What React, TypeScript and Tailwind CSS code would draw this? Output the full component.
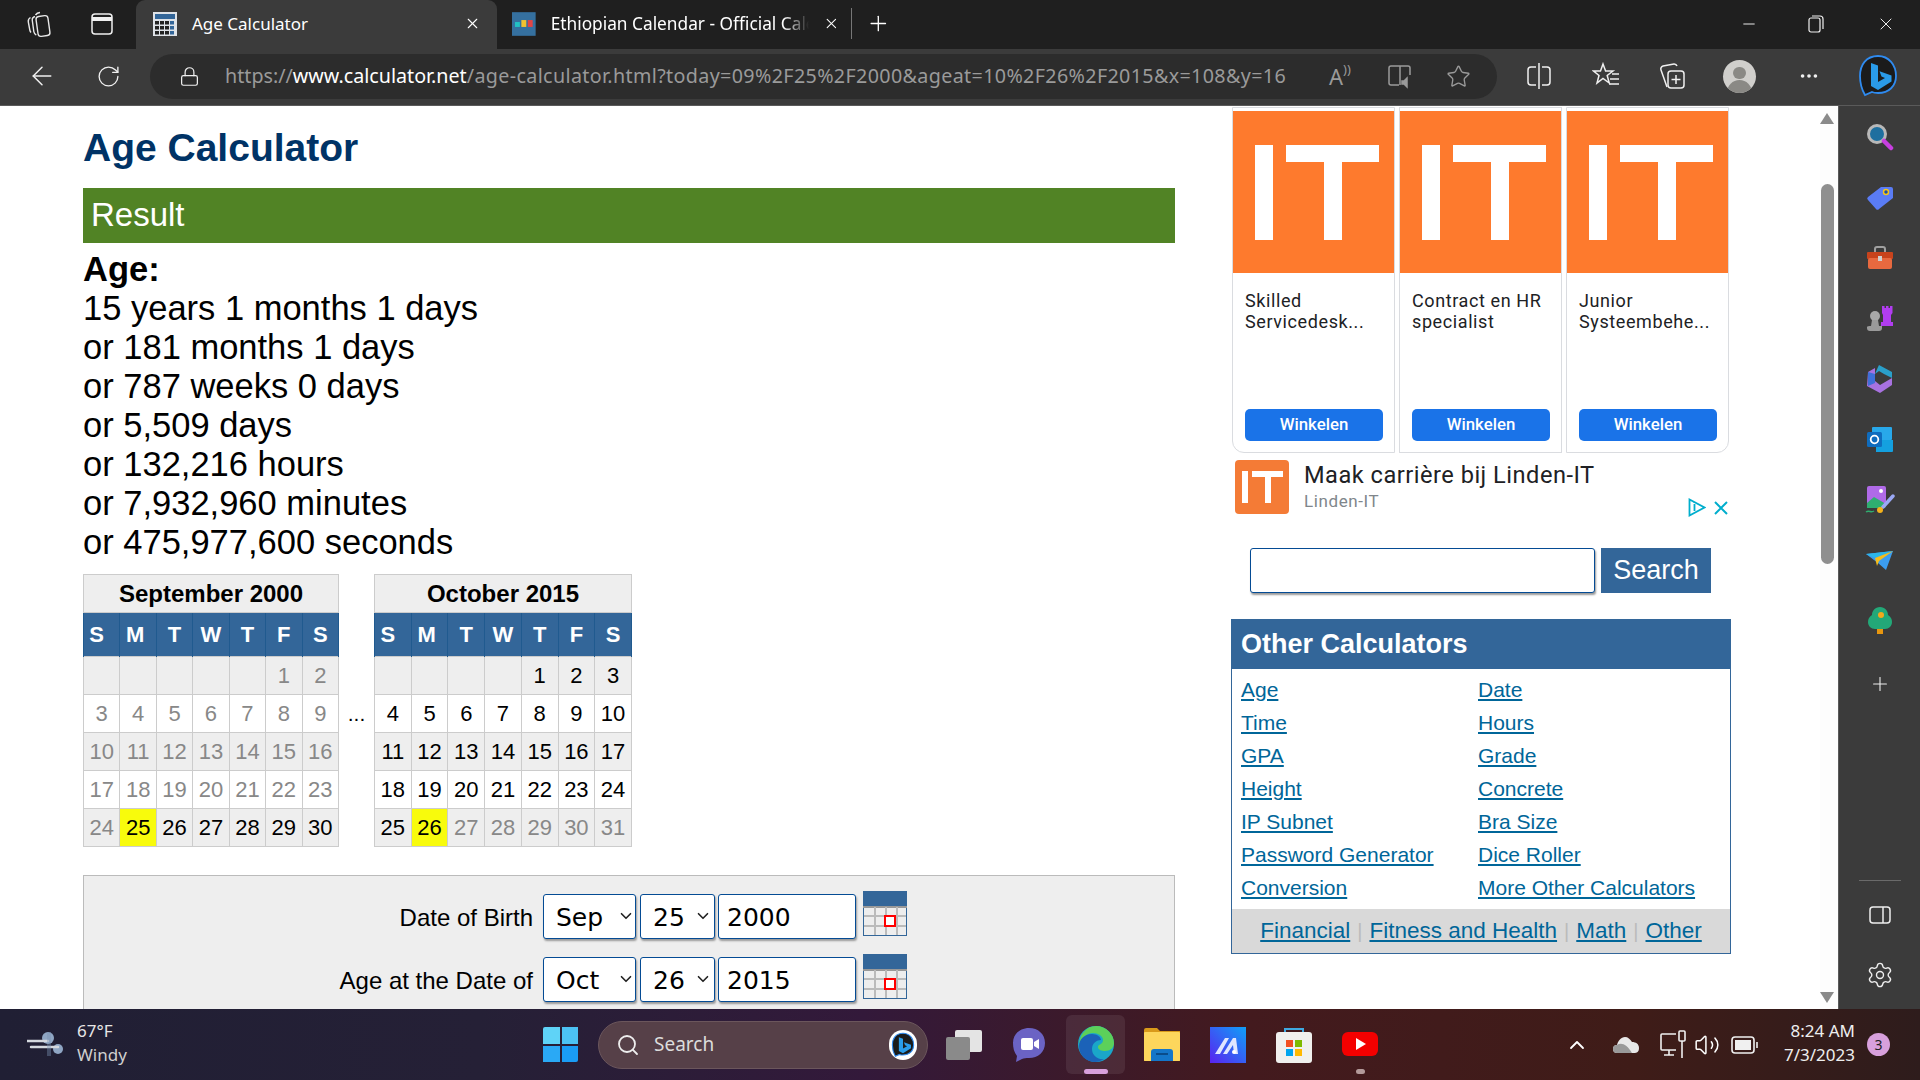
import type { ReactNode } from "react";
import { Minus, X, Plus, Search, Star, RotateCw, ArrowLeft, ChevronUp, ChevronDown, MoreHorizontal, Settings, Lock, Volume2 } from "lucide-react";

const sans = "font-['Liberation_Sans',Arial,sans-serif]";
const ui = "font-['Noto_Sans',sans-serif]";

const blue = "bg-[#336699]";

function BingIcon({ size = 44 }: { size?: number }) {
  return (
    <svg width={size} height={size} viewBox="0 0 44 44">
      <path d="M22 2C10 2 4 11 4 22c0 8 2 14 5 19l7-3c2 1 4 1 6 1 11 0 18-7 18-17C40 11 33 2 22 2Z" fill="#1b1b1b" stroke="#2f8bf0" strokeWidth="1.8" />
      <path d="M15 9l7 2.500V28l7-4-3.500-1.600-2-5.200 12 4.200v6L22 36l-7-4Z" fill="#2a9be8" />
    </svg>
  );
}

function CalcFavicon() {
  return (
    <svg width="24" height="24" viewBox="0 0 24 24">
      <rect width="24" height="24" fill="#dfe3e8" />
      <rect x="2" y="2" width="20" height="5" fill="#336699" />
      {[9, 14, 19].map((y) =>
        [2, 7, 12, 17].map((x) => <rect key={`${x}-${y}`} x={x} y={y} width="4" height="3.5" fill={x === 17 ? "#336699" : "#222"} />)
      )}
    </svg>
  );
}

function EthFavicon() {
  return (
    <svg width="24" height="24" viewBox="0 0 24 24">
      <rect width="24" height="24" fill="#35709f" />
      <rect x="3" y="10" width="5" height="5" fill="#22c1c3" />
      <rect x="9.500" y="8" width="5" height="7" fill="#f2c230" />
      <rect x="16" y="8" width="5" height="7" fill="#e04545" />
    </svg>
  );
}

function TabStrip() {
  return (
    <div className={`h-[49px] bg-[#1f1f1f] flex items-end text-white ${ui}`}>
      <div className="w-[78px] h-[47px] mb-[2px] flex items-center justify-center">
        <svg width="26" height="28" viewBox="0 0 26 28" fill="none" stroke="#e8e8e8" strokeWidth="1.4">
          <rect x="11" y="6" width="12" height="20" rx="3" transform="rotate(-8 17 16)" />
          <path d="M9 6.500C7 7 6 8.500 6.300 10.500l1.500 11c.2 1.500 1 2.800 2.500 3.500" />
          <path d="M14 2.500c-2 .2-3.500 1-4.500 2.500M4.500 7.500C2.800 8.500 2 10 2.300 12l1.500 8c.2 1 .6 1.800 1.200 2.500" />
        </svg>
      </div>
      <div className="w-[48px] h-[47px] mb-[2px] flex items-center justify-center">
        <svg width="22" height="24" viewBox="0 0 22 24" fill="none" stroke="#f0f0f0" strokeWidth="1.5">
          <rect x="1" y="2" width="20" height="20" rx="3" />
          <path d="M1 7h20" strokeWidth="4" />
        </svg>
      </div>
      <div className="ml-[10px] w-[361px] h-[49px] bg-[#3b3b3b] rounded-t-[9px] flex items-center pl-[17px] pb-[2px]">
        <CalcFavicon />
        <span className="ml-[15px] text-[17px] w-[272px]">Age Calculator</span>
        <X size={17} strokeWidth={1.5} />
      </div>
      <div className="w-[394px] h-[49px] flex items-center pl-[15px] pb-[2px]">
        <EthFavicon />
        <span className="ml-[15px] text-[17.3px] w-[262px] whitespace-nowrap overflow-hidden [mask-image:linear-gradient(to_right,black_90%,transparent)]">
          Ethiopian Calendar - Official Calendar
        </span>
        <X size={17} strokeWidth={1.5} className="ml-[14px]" />
        <div className="ml-[12px] w-px h-[31px] bg-[#777]" />
        <Plus size={25} strokeWidth={1.3} className="ml-[14px]" />
      </div>
      <div className="ml-auto flex h-[49px] items-center pb-[2px]">
        <Minus size={18} strokeWidth={1.2} className="mr-[50px]" />
        <svg width="16" height="18" viewBox="0 0 16 18" fill="none" stroke="#f0f0f0" strokeWidth="1.2" className="mr-[52px]">
          <rect x="1" y="3" width="11" height="14" rx="2" />
          <path d="M4 1h8a3 3 0 0 1 3 3v10" />
        </svg>
        <X size={20} strokeWidth={1.1} className="mr-[24px]" />
      </div>
    </div>
  );
}

function Toolbar() {
  return (
    <div className={`h-[57px] bg-[#3b3b3b] border-b border-[#5a5a5a] flex items-center pb-[2px] text-[#f0f0f0] ${ui}`}>
      <div className="w-[84px] flex justify-center">
        <ArrowLeft size={30} strokeWidth={1.2} />
      </div>
      <div className="w-[48px] flex justify-center">
        <RotateCw size={25} strokeWidth={1.3} />
      </div>
      <div className="ml-[18px] w-[1347px] h-[45px] rounded-[23px] bg-[#2c2c2c] flex items-center">
        <Lock size={21} strokeWidth={1.4} className="ml-[29px]" />
        <span className="ml-[25px] w-[1064px] text-[19.7px] whitespace-nowrap text-[#9a9a9a]">
          https://<span className="text-white">www.calculator.net</span>
          <span className="tracking-[0.36px]">/age-calculator.html?today=09%2F25%2F2000&amp;ageat=10%2F26%2F2015&amp;x=108&amp;y=16</span>
        </span>
        <span className="ml-[40px] text-[#9a9a9a] text-[22px] w-[34px]">
          A<span className="text-[13px] align-top">))</span>
        </span>
        <svg width="26" height="26" viewBox="0 0 26 26" fill="none" stroke="#9a9a9a" strokeWidth="1.5" className="ml-[24px]">
          <path d="M12 22H4a2 2 0 0 1-2-2V5a2 2 0 0 1 2-2h9v19M13 3h8a2 2 0 0 1 2 2v7" />
          <path d="M15 18h2l3-3v9l-3-3h-2Z" fill="#9a9a9a" />
        </svg>
        <Star size={25} strokeWidth={1.3} className="ml-[33px] text-[#9a9a9a]" />
      </div>
      <div className="ml-[29px] w-[26px]">
        <svg width="26" height="28" viewBox="0 0 26 28" fill="none" stroke="#f0f0f0" strokeWidth="1.5">
          <path d="M10 5H5a3 3 0 0 0-3 3v12a3 3 0 0 0 3 3h5M16 5h5a3 3 0 0 1 3 3v12a3 3 0 0 1-3 3h-5M13 1v26" />
        </svg>
      </div>
      <div className="ml-[40px]">
        <svg width="28" height="28" viewBox="0 0 28 28" fill="none" stroke="#f0f0f0" strokeWidth="1.5">
          <path d="M11 2l2.600 7H21l-5.800 4.500 2 7.500L11 16.500 5 21l2-7.500L1.500 9h7Z" />
          <path d="M20 12h7M18 17h9M17 22h10" />
        </svg>
      </div>
      <div className="ml-[38px]">
        <svg width="28" height="28" viewBox="0 0 28 28" fill="none" stroke="#f0f0f0" strokeWidth="1.5">
          <path d="M9 25 3 8a3 3 0 0 1 2-4l11-2a3 3 0 0 1 3 2" />
          <rect x="10" y="9" width="16" height="17" rx="3" />
          <path d="M18 13v9M13.500 17.500h9" />
        </svg>
      </div>
      <div className="ml-[37px] w-[33px] h-[33px] rounded-full bg-[#d0cfcc] overflow-hidden flex flex-col items-center">
        <div className="mt-[7px] w-[13px] h-[14px] rounded-full bg-[#8a8985]" />
        <div className="mt-[1px] w-[25px] h-[14px] rounded-t-full bg-[#8a8985]" />
      </div>
      <MoreHorizontal size={22} strokeWidth={2} className="ml-[42px]" />
      <div className="ml-[36px]">
        <BingIcon />
      </div>
    </div>
  );
}

const results = [
  "15 years 1 months 1 days",
  "or 181 months 1 days",
  "or 787 weeks 0 days",
  "or 5,509 days",
  "or 132,216 hours",
  "or 7,932,960 minutes",
  "or 475,977,600 seconds",
];

type CalProps = { title: string; cells: (number | null)[]; activeFrom: number; activeTo: number; mark: number; width: string };

// activeFrom/activeTo are cell indexes, everything outside them is grey
function MonthTable({ title, cells, activeFrom, activeTo, mark, width }: CalProps) {
  const heads = ["S", "M", "T", "W", "T", "F", "S"];
  const rows = [0, 1, 2, 3, 4].map((r) => cells.slice(r * 7, r * 7 + 7));
  return (
    <table className={`border-collapse table-fixed ${width} text-[22px] ${sans}`}>
      <thead>
        <tr>
          <th colSpan={7} className="h-[38px] bg-[#eeeeee] border border-[#cccccc] text-[24px] font-bold text-black">
            {title}
          </th>
        </tr>
        <tr className="bg-[#336699] text-white">
          {heads.map((h, i) => (
            <th
              key={i}
              className={`h-[44px] w-[36.7px] p-0 font-bold border-x border-[#205a8f] text-[22px] ${i === 0 ? "pr-[10px]" : i === 1 ? "pr-[6px]" : ""}`}
            >
              {h}
            </th>
          ))}
        </tr>
      </thead>
      <tbody>
        {rows.map((row, r) => (
          <tr key={r} className={r % 2 === 0 ? "bg-[#eeeeee]" : "bg-white"}>
            {row.map((d, c) => {
              const idx = r * 7 + c;
              const on = idx >= activeFrom && idx <= activeTo;
              return (
                <td
                  key={c}
                  className={`h-[38px] p-0 text-center border border-[#cccccc] ${on ? "text-black" : "text-[#888888]"} ${idx === mark ? "bg-[#f8fb0c]" : ""}`}
                >
                  {d ?? ""}
                </td>
              );
            })}
          </tr>
        ))}
      </tbody>
    </table>
  );
}

const sepCells = [null, null, null, null, null, 1, 2, ...Array.from({ length: 28 }, (_, i) => i + 3)];
const octCells = [null, null, null, null, 1, 2, 3, ...Array.from({ length: 28 }, (_, i) => i + 4)];

function CalIcon({ className = "" }: { className?: string }) {
  return (
    <svg width="44" height="45" viewBox="0 0 44 45" className={className}>
      <rect width="44" height="45" fill="#336699" />
      <rect x="1" y="15" width="42" height="29" fill="#eeeeee" />
      <rect x="0" y="15" width="44" height="2" fill="#999" />
      {[11, 22, 33].map((x) => (
        <rect key={x} x={x} y="16" width="2" height="28" fill="#bbb" />
      ))}
      {[24, 34].map((y) => (
        <rect key={y} x="1" y={y} width="42" height="2" fill="#bbb" />
      ))}
      <rect x="22" y="25" width="10" height="10" fill="#fff" stroke="#ff0000" strokeWidth="2" />
    </svg>
  );
}

const fieldFont = "font-['DejaVu_Sans',sans-serif]";
const field = `h-[45px] bg-white border border-[#044b94] rounded-[3px] shadow-[1px_2px_2px_#999] text-black text-[25px] pt-[2px] ${fieldFont}`;

function SelectBox({ value, width, pad, arrow }: { value: string; width: string; pad: string; arrow: string }) {
  return (
    <div className={`relative ${width}`}>
      <select defaultValue={value} className={`${field} w-full appearance-none ${pad}`}>
        <option>{value}</option>
      </select>
      <ChevronDown size={18} strokeWidth={2.2} className={`absolute top-[13px] text-[#222] pointer-events-none ${arrow}`} />
    </div>
  );
}

function DateRow({ label, month, day, year }: { label: string; month: string; day: string; year: string }) {
  return (
    <div className="flex items-start h-[63px]">
      <label className="w-[459px] pr-[10px] pt-[6px] text-right text-[24px] text-black">{label}</label>
      <SelectBox value={month} width="w-[93px]" pad="pl-[12px]" arrow="right-[1px]" />
      <SelectBox value={day} width="w-[75px] ml-[4px]" pad="pl-[12px]" arrow="right-[3px]" />
      <input readOnly value={year} className={`${field} w-[138px] ml-[3px] pl-[8px]`} />
      <CalIcon className="ml-[7px] -mt-[3px]" />
    </div>
  );
}

function ItTile() {
  return (
    <div className="h-[162px] bg-[#fe7a2d] flex items-start pt-[34px] pl-[22px]">
      <div className="w-[18px] h-[95px] bg-white" />
      <div className="ml-[13px] w-[93px] h-[95px] flex flex-col items-center">
        <div className="w-full h-[17px] bg-white" />
        <div className="w-[18px] h-[78px] bg-white" />
      </div>
    </div>
  );
}

function AdCard({ title, rounded }: { title: string[]; rounded: string }) {
  return (
    <div className={`w-[163px] h-[346px] border border-[#dadce0] bg-white overflow-hidden flex flex-col pt-[3px] ${rounded}`}>
      <ItTile />
      <div className="mt-[17px] ml-[12px] text-[18px] leading-[21px] text-[#202124] font-['Roboto',sans-serif] flex-1 tracking-[0.6px]">
        {title.map((t) => (
          <div key={t}>{t}</div>
        ))}
      </div>
      <button className="ml-[12px] mb-[11px] w-[138px] h-[32px] rounded-[5px] bg-[#1a73e8] text-white text-[16.8px] font-medium font-['Roboto',sans-serif]">
        Winkelen
      </button>
    </div>
  );
}

function AdBlock() {
  return (
    <div className="ml-[1px] w-[497px]">
      <div className="flex gap-[4px] mt-[1px]">
        <AdCard title={["Skilled", "Servicedesk..."]} rounded="rounded-bl-[12px]" />
        <AdCard title={["Contract en HR", "specialist"]} rounded="" />
        <AdCard title={["Junior", "Systeembehe..."]} rounded="rounded-br-[12px]" />
      </div>
      <div className="flex items-start h-[54px] mt-[7px] ml-[3px] font-['Roboto',sans-serif]">
        <div className="w-[54px] h-[54px] rounded-[4px] bg-[#f47b36] flex items-start pt-[11px] pl-[7px]">
          <div className="w-[6px] h-[32px] bg-white" />
          <div className="ml-[4px] w-[31px] h-[32px] flex flex-col items-center">
            <div className="w-full h-[6px] bg-white" />
            <div className="w-[6px] h-[26px] bg-white" />
          </div>
        </div>
        <div className="ml-[15px] flex-1 pt-[1px]">
          <div className="text-[23.6px] leading-[28px] text-[#202124] tracking-[0.5px]">Maak carrière bij Linden-IT</div>
          <div className="flex items-start justify-between">
            <span className="text-[17px] text-[#80868b] tracking-[0.6px]">Linden-IT</span>
            <span className="flex items-center gap-[8px] mt-[9px] mr-[1px]">
              <svg width="18" height="19" viewBox="0 0 18 19" fill="none" stroke="#00aecd" strokeWidth="1.800">
                <path d="M1.500 1.500v16L16.500 9.500Z" />
                <path d="M6.500 6v7M6.500 4v1" />
              </svg>
              <svg width="14" height="14" viewBox="0 0 14 14" stroke="#00aecd" strokeWidth="2">
                <path d="M1 1l12 12M13 1 1 13" />
              </svg>
            </span>
          </div>
        </div>
      </div>
    </div>
  );
}

const calcLinks = [
  ["Age", "Date"],
  ["Time", "Hours"],
  ["GPA", "Grade"],
  ["Height", "Concrete"],
  ["IP Subnet", "Bra Size"],
  ["Password Generator", "Dice Roller"],
  ["Conversion", "More Other Calculators"],
];

function OtherCalculators() {
  const link = "text-[#006699] underline";
  return (
    <div className={`w-[500px] border border-[#336699] ${sans}`}>
      <div className={`h-[49px] ${blue} flex items-center pl-[9px] text-white font-bold text-[27px]`}>Other Calculators</div>
      <div className="grid grid-cols-[237px_1fr] pl-[9px] pt-[4px] pb-[5px] text-[21px]">
        {calcLinks.flat().map((l) => (
          <div key={l} className="h-[33px] flex items-center">
            <a className={link}>{l}</a>
          </div>
        ))}
      </div>
      <div className="h-[44px] bg-[#d9d9d9] flex items-center justify-center text-[22.5px]">
        <a className={link}>Financial</a>
        <span className="mx-[7px] text-[#bbbbbb] text-[20px]">|</span>
        <a className={link}>Fitness and Health</a>
        <span className="mx-[7px] text-[#bbbbbb] text-[20px]">|</span>
        <a className={link}>Math</a>
        <span className="mx-[7px] text-[#bbbbbb] text-[20px]">|</span>
        <a className={link}>Other</a>
      </div>
    </div>
  );
}

function Page() {
  return (
    <div className={`flex-1 bg-white overflow-hidden flex ${sans}`}>
      <div className="ml-[83px] w-[1092px] shrink-0">
        <h1 className="mt-[17px] h-[50px] text-[39px] leading-[50px] font-bold text-[#003366]">Age Calculator</h1>
        <div className="mt-[15px] h-[55px] bg-[#518325] flex items-center pl-[8px] pb-[1px] text-white text-[33px]">Result</div>
        <div className="mt-[7px] text-[34.5px] leading-[39px] text-black">
          <div className="font-bold">Age:</div>
          {results.map((r) => (
            <div key={r}>{r}</div>
          ))}
        </div>
        <div className="mt-[12px] flex items-center">
          <MonthTable title="September 2000" cells={sepCells} activeFrom={29} activeTo={34} mark={29} width="w-[256px]" />
          <div className="w-[35px] text-center text-[21px] text-black pt-[6px]">...</div>
          <MonthTable title="October 2015" cells={octCells} activeFrom={0} activeTo={29} mark={29} width="w-[258px]" />
        </div>
        <div className="mt-[28px] h-[200px] bg-[#eeeeee] border border-[#bbbbbb] pt-[18px]">
          <DateRow label="Date of Birth" month="Sep" day="25" year="2000" />
          <DateRow label="Age at the Date of" month="Oct" day="26" year="2015" />
        </div>
      </div>
      <div className="ml-[56px] w-[500px] shrink-0">
        <AdBlock />
        <div className="mt-[34px] flex ml-[19px]">
          <input className="w-[345px] h-[45px] border border-[#044b94] rounded-[3px] bg-white shadow-[1px_2px_2px_#999]" />
          <button className={`ml-[6px] w-[110px] h-[45px] ${blue} text-white text-[27px]`}>Search</button>
        </div>
        <div className="mt-[26px]">
          <OtherCalculators />
        </div>
      </div>
    </div>
  );
}

function Scrollbar() {
  return (
    <div className="w-[18px] bg-[#fdfdfd] flex flex-col items-center pt-[7px] pb-[6px] pr-[4px]">
      <div className="w-0 h-0 border-x-[7px] border-x-transparent border-b-[11px] border-b-[#8a8a8a]" />
      <div className="mt-[60px] w-[13px] h-[380px] rounded-full bg-[#8f8f8f]" />
      <div className="mt-auto w-0 h-0 border-x-[7px] border-x-transparent border-t-[11px] border-t-[#8a8a8a]" />
    </div>
  );
}

function SideIcon({ children }: { children: ReactNode }) {
  return <div className="h-[60.5px] flex items-center justify-center">{children}</div>;
}

function Sidebar() {
  return (
    <div className="w-[82px] bg-[#3b3b3b] border-l border-[#5a5a5a] flex flex-col items-center pt-[1px] text-[#eeeeee]">
      <SideIcon>
        <svg width="28" height="28" viewBox="0 0 28 28">
          <circle cx="11" cy="11" r="8.500" fill="#1e6f9f" stroke="#b8b8b8" strokeWidth="3" />
          <path d="M18 18l7 7" stroke="#c83fe0" strokeWidth="4.500" strokeLinecap="round" />
        </svg>
      </SideIcon>
      <SideIcon>
        <svg width="28" height="26" viewBox="0 0 28 26">
          <path d="M15 2h10a2 2 0 0 1 2 2v9L13 24a2 2 0 0 1-3 0L2 15a2 2 0 0 1 0-3Z" fill="#5a7cf5" />
          <circle cx="20" cy="7" r="2.500" fill="#1b4ea8" stroke="#f5c518" strokeWidth="1.500" />
        </svg>
      </SideIcon>
      <SideIcon>
        <svg width="28" height="24" viewBox="0 0 28 24">
          <path d="M9 6V3a2 2 0 0 1 2-2h6a2 2 0 0 1 2 2v3" fill="none" stroke="#a0a0a0" strokeWidth="2" />
          <rect x="1" y="6" width="26" height="7" rx="1" fill="#c8431c" />
          <rect x="2" y="12" width="24" height="11" rx="2" fill="#e8693f" />
          <rect x="12" y="10" width="4" height="5" fill="#cfcfcf" />
        </svg>
      </SideIcon>
      <SideIcon>
        <svg width="28" height="28" viewBox="0 0 28 28">
          <path d="M16 1h2.500v2H20V1h2.500v2H24V1h2.500v7L25 10v7h2v4H15v-4h2v-7l-1-2Z" fill="#b13df0" />
          <circle cx="9" cy="11" r="5" fill="#a8a8a8" />
          <path d="M6 15h6l1 6h3v2c0 2-1 3-3 3H4c-2 0-3-1-3-3v-1c0-1 2-1 4-1Z" fill="#9a9a9a" />
        </svg>
      </SideIcon>
      <SideIcon>
        <svg width="26" height="28" viewBox="0 0 26 28">
          <path d="M12 0 25 7v6l-8-4-5-3-4 3 3-7Z" fill="#2a9fc9" />
          <path d="M1 7l7-4v13l5 4 12-7v7l-12 8-13-7Z" fill="#a872e0" />
          <path d="M1 7l7 2v9l-7 3Z" fill="#3f6fd8" />
        </svg>
      </SideIcon>
      <SideIcon>
        <svg width="26" height="26" viewBox="0 0 26 26">
          <rect x="5" y="0" width="20" height="13" rx="1" fill="#28a8ea" />
          <path d="M9 13h17v11a1 1 0 0 1-1 1H9Z" fill="#14a0df" />
          <rect x="0" y="5" width="15" height="15" rx="1.500" fill="#0f6cbd" />
          <circle cx="7.500" cy="12.500" r="3.800" fill="none" stroke="#fff" strokeWidth="1.800" />
        </svg>
      </SideIcon>
      <SideIcon>
        <svg width="30" height="30" viewBox="0 0 30 30">
          <rect x="2" y="1" width="19" height="20" rx="2" fill="#b06ae8" />
          <path d="M2 18l7-6 12 7v2a2 2 0 0 1-2 2H2Z" fill="#2fae70" />
          <circle cx="16" cy="6" r="2" fill="#fff" />
          <path d="M18 22 28 11" stroke="#9aa8f5" strokeWidth="3.500" strokeLinecap="round" />
          <circle cx="15" cy="25" r="3" fill="#f5b21b" />
          <path d="M1 27c3-2 5 1 8-1" stroke="#2fae70" strokeWidth="1.500" fill="none" />
        </svg>
      </SideIcon>
      <SideIcon>
        <svg width="28" height="20" viewBox="0 0 28 20">
          <path d="M0 3 27 0 20 19l-8-7Z" fill="#3b9df0" />
          <path d="M0 3 27 0 9 7Z" fill="#2bb7ea" />
          <path d="M27 0 9 7l2 8 2-5Z" fill="#f5bd1b" />
        </svg>
      </SideIcon>
      <SideIcon>
        <svg width="24" height="28" viewBox="0 0 24 28">
          <rect x="9" y="20" width="6" height="7" fill="#e8960f" />
          <path d="M12 0c5 0 8 4 8 8 3 2 4 4 4 7 0 4-3 7-7 7H7c-4 0-7-3-7-7 0-3 1-5 4-7 0-4 3-8 8-8Z" fill="#23a878" />
          <circle cx="13" cy="8" r="3" fill="#f5a81b" />
        </svg>
      </SideIcon>
      <div className="h-[64px] flex items-center">
        <Plus size={22} strokeWidth={1.2} />
      </div>
      <div className="mt-auto mb-[4px] w-[42px] h-px bg-[#6a6a6a]" />
      <div className="h-[60px] flex items-center">
        <svg width="22" height="18" viewBox="0 0 22 18" fill="none" stroke="#eeeeee" strokeWidth="1.500">
          <rect x="1" y="1" width="20" height="16" rx="3" />
          <path d="M14 1v16" />
        </svg>
      </div>
      <div className="h-[60px] mb-[4px] flex items-center">
        <Settings size={28} strokeWidth={1.2} />
      </div>
    </div>
  );
}

function TaskbarGlyph({ children, width }: { children: ReactNode; width: string }) {
  return <div className={`${width} flex justify-center items-center`}>{children}</div>;
}

function Taskbar() {
  return (
    <div className={`h-[71px] shrink-0 flex items-center text-white ${ui} bg-[linear-gradient(90deg,#201f34_0%,#252036_25%,#33193a_45%,#431a1e_65%,#3f1c18_85%,#2e1c1c_100%)]`}>
      <div className="w-[77px] flex justify-end pr-[13px]">
        <svg width="37" height="26" viewBox="0 0 37 26">
          <circle cx="21" cy="6" r="6" fill="#8fa6c4" />
          <circle cx="31" cy="17" r="5" fill="#8fa6c4" />
          <path d="M0 9h21M4 15h27" stroke="#d4d8de" strokeWidth="2.500" strokeLinecap="round" />
          <rect x="20" y="0" width="4" height="24" fill="#7a93b4" opacity="0.400" />
        </svg>
      </div>
      <div className="w-[466px] pb-[3px] text-[17px] leading-[24px] text-[#e6e6e6]">
        <div>67°F</div>
        <div className="text-[#cfcfcf]">Windy</div>
      </div>
      <div className="w-[35px] h-[35px] grid grid-cols-2 gap-[2px]">
        <div className="bg-[#5fd3f7] rounded-tl-[2px]" />
        <div className="bg-[#4cc2f4]" />
        <div className="bg-[#2aa9f5]" />
        <div className="bg-[#1a9cf5] rounded-br-[2px]" />
      </div>
      <div className="ml-[20px] w-[330px] h-[48px] rounded-full bg-[#564048] border border-[#6b565c] flex items-center pl-[17px]">
        <Search size={24} strokeWidth={1.8} className="text-[#eeeeee]" />
        <span className="ml-[14px] text-[19px] text-[#dcdcdc]">Search</span>
        <div className="ml-auto mr-[10px] w-[28px] h-[30px] rounded-[14px] bg-white flex items-center justify-center">
          <BingIcon size={26} />
        </div>
      </div>
      <TaskbarGlyph width="w-[72px]">
        <svg width="36" height="30" viewBox="0 0 36 30">
          <rect x="9" y="0" width="27" height="22" rx="2" fill="#e4e4e4" />
          <rect x="0" y="7" width="24" height="23" rx="2" fill="#8a8a8a" />
        </svg>
      </TaskbarGlyph>
      <TaskbarGlyph width="w-[58px]">
        <svg width="34" height="36" viewBox="0 0 34 36">
          <path d="M17 1c9 0 16 6 16 15s-7 15-16 15c-3 0-5 0-7 1l-6 3 1-6C2 25 1 21 1 16 1 7 8 1 17 1Z" fill="#6b63c4" />
          <rect x="9" y="11" width="12" height="12" rx="2" fill="#fff" />
          <path d="M22 15l5-3v10l-5-3Z" fill="#fff" />
        </svg>
      </TaskbarGlyph>
      <div className="w-[59px] h-[59px] ml-[8px] rounded-[6px] bg-[#ffffff14] flex flex-col items-center pt-[11px] relative">
        <svg width="36" height="36" viewBox="0 0 36 36">
          <circle cx="18" cy="18" r="18" fill="#1aa6c9" />
          <path d="M18 0c10 0 18 8 18 17 0 5-4 8-9 8-3 0-7-1-7-4 0-3 5-2 5-7 0-4-5-7-10-7C9 7 2 13 1 20 1 9 8 0 18 0Z" fill="#5cd05a" />
          <path d="M1 20c0-6 5-12 13-12 5 0 9 3 9 6-4 0-9 3-9 9 0 6 5 11 12 10-3 2-6 3-9 3-9 0-16-7-16-16Z" fill="#1b62b8" />
        </svg>
        <div className="absolute bottom-0 w-[24px] h-[5px] rounded-[3px] bg-[#d8a0dc]" />
      </div>
      <div className="ml-[1px]">
        <TaskbarGlyph width="w-[72px]">
          <svg width="36" height="33" viewBox="0 0 36 33">
            <path d="M0 2a2 2 0 0 1 2-2h11l3 3h20v30H0Z" fill="#d99a1a" />
            <rect x="0" y="4" width="36" height="29" rx="1" fill="#fdd65c" />
            <path d="M7 33V24a3 3 0 0 1 3-3h16a3 3 0 0 1 3 3v9Z" fill="#1476c9" />
            <rect x="12" y="25" width="12" height="2" fill="#0a4c8a" />
          </svg>
        </TaskbarGlyph>
      </div>
      <TaskbarGlyph width="w-[60px]">
        <svg width="36" height="36" viewBox="0 0 36 36">
          <defs>
            <linearGradient id="zm" x1="0" y1="1" x2="1" y2="0">
              <stop offset="0" stopColor="#5a22f0" />
              <stop offset="1" stopColor="#0fa0f8" />
            </linearGradient>
          </defs>
          <rect width="36" height="36" fill="url(#zm)" />
          <path d="M5 27 15 11h4L10 27ZM13 27l10-16h3l2 16h-4l-1-9-6 9Z" fill="#dfe6ff" />
          <circle cx="24" cy="25" r="2" fill="#fff" />
        </svg>
      </TaskbarGlyph>
      <TaskbarGlyph width="w-[71px]">
        <svg width="36" height="36" viewBox="0 0 36 36">
          <path d="M9 7V2h18v5" fill="none" stroke="#3fa9e0" strokeWidth="2" />
          <rect x="0" y="5" width="36" height="31" rx="3" fill="#f0f0ee" />
          <rect x="10" y="13" width="7" height="7" fill="#f25022" />
          <rect x="19" y="13" width="7" height="7" fill="#7fba00" />
          <rect x="10" y="22" width="7" height="7" fill="#00a4ef" />
          <rect x="19" y="22" width="7" height="7" fill="#ffb900" />
        </svg>
      </TaskbarGlyph>
      <div className="w-[62px] self-start flex flex-col items-center pt-[23px]">
        <svg width="36" height="24" viewBox="0 0 36 24">
          <rect width="36" height="24" rx="6" fill="#f40000" />
          <path d="M14 6l10 6-10 6Z" fill="#fff" />
        </svg>
        <div className="mt-[13px] w-[9px] h-[5px] rounded-full bg-[#b39a9a]" />
      </div>
      <ChevronUp size={24} strokeWidth={1.8} className="ml-[174px]" />
      <div className="ml-[24px] w-[26px]">
        <svg width="26" height="18" viewBox="0 0 26 18">
          <path d="M4 17a4 4 0 0 1 0-8c1-4 4-8 8-8 3 0 5 2 7 5 4 0 7 2 7 6s-2 5-5 5Z" fill="#e8e8e8" />
          <path d="M4 9c4-3 10-1 15 8H4a4 4 0 0 1 0-8Z" fill="#9a9a9a" />
        </svg>
      </div>
      <div className="ml-[21px]">
        <svg width="26" height="30" viewBox="0 0 26 30" fill="none" stroke="#f0f0f0" strokeWidth="1.600">
          <path d="M16 20H2a1 1 0 0 1-1-1V5a1 1 0 0 1 1-1h14M9 20v5M4 25h10" />
          <rect x="19" y="1" width="6" height="10" rx="1" />
          <path d="M22 11v17" />
        </svg>
      </div>
      <Volume2 size={26} strokeWidth={1.4} className="ml-[8px]" />
      <div className="ml-[11px]">
        <svg width="27" height="18" viewBox="0 0 27 18" fill="none" stroke="#f0f0f0" strokeWidth="1.600">
          <rect x="1" y="1" width="22" height="16" rx="3" />
          <rect x="4" y="4" width="16" height="10" fill="#f0f0f0" stroke="none" />
          <path d="M26 6v6" />
        </svg>
      </div>
      <div className="ml-auto pb-[3px] text-right text-[17px] leading-[24px] text-[#eeeeee]">
        <div>8:24 AM</div>
        <div>7/3/2023</div>
      </div>
      <div className="ml-[12px] mr-[30px] w-[23px] h-[23px] rounded-full bg-[#d8a0dc] text-[#222] text-[14px] flex items-center justify-center">3</div>
    </div>
  );
}

export default function App() {
  return (
    <div className="w-[1920px] h-screen flex flex-col overflow-hidden bg-white">
      <TabStrip />
      <Toolbar />
      <div className="flex-1 flex min-h-0">
        <Page />
        <Scrollbar />
        <Sidebar />
      </div>
      <Taskbar />
    </div>
  );
}
